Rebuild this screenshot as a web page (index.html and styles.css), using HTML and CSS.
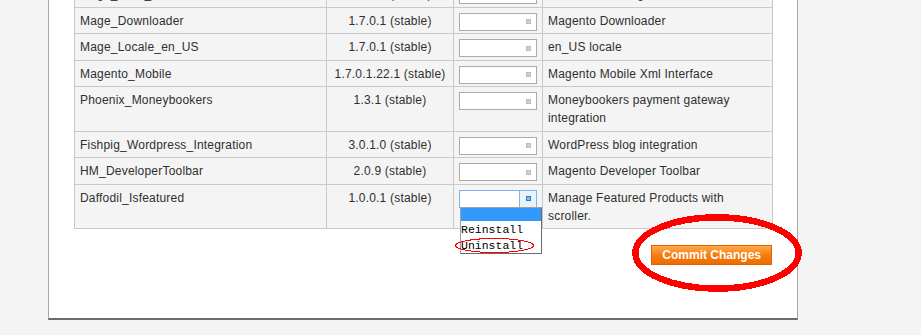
FILE: index.html
```html
<!DOCTYPE html>
<html lang="en">
<head>
    <meta charset="UTF-8">
    <title>Magento Connect Manager - Extensions</title>
    <link rel="stylesheet" href="styles.css">
</head>
<body>
    <div class="panel">
        <table class="ext-grid">
            <colgroup>
                <col class="c-name">
                <col class="c-version">
                <col class="c-action">
                <col class="c-summary">
            </colgroup>
            <tbody>
                <tr>
                    <td>Mage_Core_Modules</td>
                    <td class="ver">1.7.0.1 (stable)</td>
                    <td><div class="pick"><span class="pick-btn"><i></i></span></div></td>
                    <td>Collection of Magento Core Modules</td>
                </tr>
                <tr>
                    <td>Mage_Downloader</td>
                    <td class="ver">1.7.0.1 (stable)</td>
                    <td><div class="pick"><span class="pick-btn"><i></i></span></div></td>
                    <td>Magento Downloader</td>
                </tr>
                <tr>
                    <td>Mage_Locale_en_US</td>
                    <td class="ver">1.7.0.1 (stable)</td>
                    <td><div class="pick"><span class="pick-btn"><i></i></span></div></td>
                    <td>en_US locale</td>
                </tr>
                <tr>
                    <td>Magento_Mobile</td>
                    <td class="ver">1.7.0.1.22.1 (stable)</td>
                    <td><div class="pick"><span class="pick-btn"><i></i></span></div></td>
                    <td>Magento Mobile Xml Interface</td>
                </tr>
                <tr>
                    <td>Phoenix_Moneybookers</td>
                    <td class="ver">1.3.1 (stable)</td>
                    <td><div class="pick"><span class="pick-btn"><i></i></span></div></td>
                    <td>Moneybookers payment gateway integration</td>
                </tr>
                <tr>
                    <td>Fishpig_Wordpress_Integration</td>
                    <td class="ver">3.0.1.0 (stable)</td>
                    <td><div class="pick"><span class="pick-btn"><i></i></span></div></td>
                    <td>WordPress blog integration</td>
                </tr>
                <tr>
                    <td>HM_DeveloperToolbar</td>
                    <td class="ver">2.0.9 (stable)</td>
                    <td><div class="pick"><span class="pick-btn"><i></i></span></div></td>
                    <td>Magento Developer Toolbar</td>
                </tr>
                <tr>
                    <td>Daffodil_Isfeatured</td>
                    <td class="ver">1.0.0.1 (stable)</td>
                    <td>
                        <div class="pick open">
                            <span class="pick-btn"><i></i></span>
                            <ul class="pick-list">
                                <li class="selected">&nbsp;</li>
                                <li>Reinstall</li>
                                <li>Uninstall</li>
                            </ul>
                        </div>
                    </td>
                    <td>Manage Featured Products with scroller.</td>
                </tr>
            </tbody>
        </table>

        <div class="actions">
            <button class="btn-commit" type="button">Commit Changes</button>
        </div>
    </div>

    <!-- hand-drawn highlight marks on top of the screenshot -->
    <svg class="marks" width="921" height="335" viewBox="0 0 921 335">
        <ellipse cx="494.5" cy="245.5" rx="39" ry="7" fill="none" stroke="#ff0000" stroke-width="1" shape-rendering="crispEdges"/>
        <ellipse cx="717" cy="253" rx="81.6" ry="35.6" fill="none" stroke="#ff0000" stroke-width="6.5" shape-rendering="crispEdges"/>
    </svg>
</body>
</html>
```

FILE: styles.css
```css
html, body {
    margin: 0;
    padding: 0;
}
body {
    position: relative;
    height: 335px;
    overflow: hidden;
    background: #f4f4f4;
    font-family: "Liberation Sans", Arial, sans-serif;
    font-size: 12px;
    color: #2f2f2f;
}
.panel {
    box-sizing: border-box;
    width: 750px;
    margin: -20px 0 0 48px;
    padding: 0 25px 53px;
    background: #fff;
    border-left: 1px solid #a6a6a6;
    border-right: 1px solid #a6a6a6;
    border-bottom: 2px solid #6b6b6b;
}
.ext-grid {
    width: 698px;
    table-layout: fixed;
    border-collapse: collapse;
    letter-spacing: 0.2px;
}
.c-name { width: 252px; }
.c-version { width: 127px; }
.c-action { width: 89px; }
.c-summary { width: 230px; }
.ext-grid td {
    background: #f4f4f4;
    border: 1px solid #c9c9c9;
    padding: 4px 5px 3.5px;
    line-height: 18px;
    vertical-align: top;
}
.ext-grid td.ver {
    text-align: center;
}
.pick {
    box-sizing: border-box;
    position: relative;
    width: 78px;
    height: 18px;
    margin: 1px 0 -1px;
    background: #fff;
    border: 1px solid #ababab;
}
.pick-btn {
    position: absolute;
    top: 0;
    right: 0;
    bottom: 0;
    width: 16px;
    display: flex;
    align-items: center;
    justify-content: center;
}
.pick-btn i {
    display: block;
    box-sizing: border-box;
    width: 5px;
    height: 5px;
    border: 1px solid #bdbdbd;
    background: #cfcfcf;
}
.pick.open {
    border-color: #7eb4ea;
}
.pick.open .pick-btn {
    border-left: 1px solid #7eb4ea;
    background: #e9f3fc;
}
.pick.open .pick-btn i {
    border-color: #2b78c5;
    background: #7fbcf0;
}
.pick-list {
    position: absolute;
    top: 100%;
    left: 0;
    box-sizing: border-box;
    width: 82px;
    margin: 0;
    padding: 0;
    list-style: none;
    background: #fff;
    border: 1px solid #6a6a6a;
    border-top-color: #a0a0a0;
    border-left-color: #a0a0a0;
    font-family: "Liberation Mono", "Courier New", monospace;
    font-size: 11.5px;
    letter-spacing: 0;
    color: #000;
}
.pick-list li {
    height: 16px;
    line-height: 18px;
    white-space: nowrap;
}
.pick-list li.selected {
    height: 13px;
    background: #3399ff;
}
.actions {
    display: flex;
    justify-content: flex-end;
    margin-top: 16px;
}
.btn-commit {
    height: 20px;
    padding: 0 10px;
    border: 1px solid #e06300;
    background: linear-gradient(#ffa94a, #f47b0c 55%, #ee6c00);
    color: #fff;
    font-family: "Liberation Sans", Arial, sans-serif;
    font-size: 12px;
    font-weight: bold;
    line-height: 18px;
    cursor: pointer;
}
.marks {
    position: absolute;
    top: 0;
    left: 0;
    pointer-events: none;
}
```
